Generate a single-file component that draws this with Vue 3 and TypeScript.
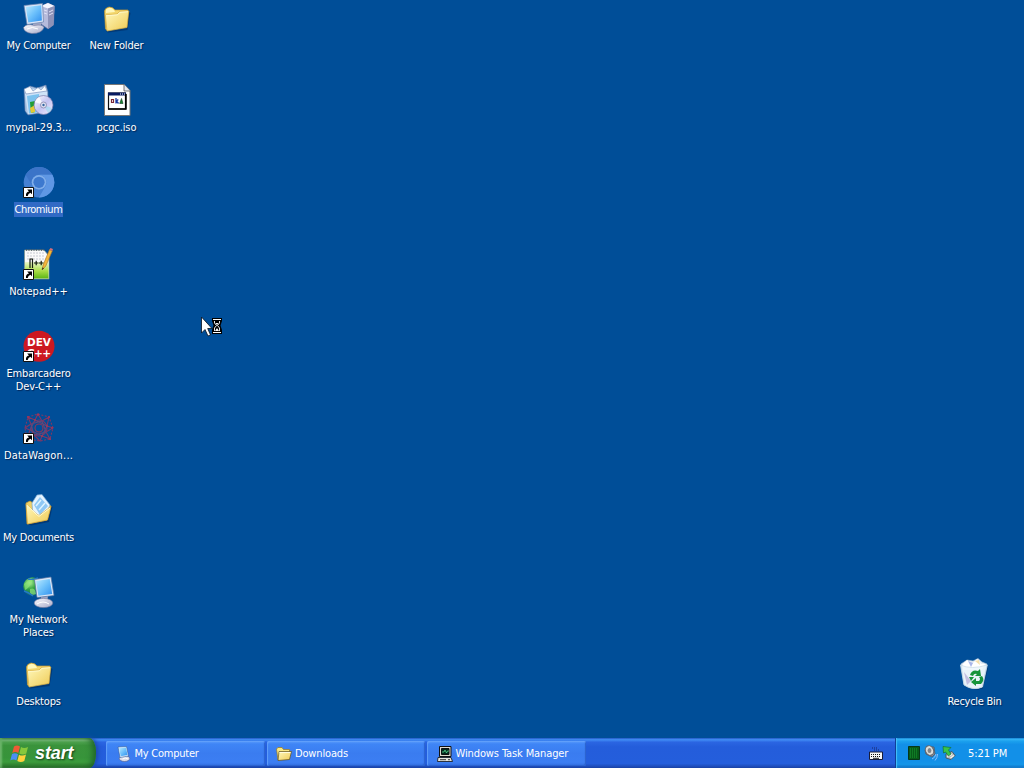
<script setup lang="ts">
interface DesktopItem {
  icon: string
  lines: string[]
  col: number
  row: number
  spacing: number
  shortcut?: boolean
  selected?: boolean
}

interface TaskItem {
  icon: string
  label: string
  spacing: number
}

const items: DesktopItem[] = [
  { icon: 'computer', lines: ['My Computer'], col: 1, row: 1, spacing: -0.24 },
  { icon: 'installer', lines: ['mypal-29.3...'], col: 1, row: 2, spacing: 0 },
  { icon: 'chromium', lines: ['Chromium'], col: 1, row: 3, spacing: -0.45, shortcut: true, selected: true },
  { icon: 'notepad', lines: ['Notepad++'], col: 1, row: 4, spacing: 0, shortcut: true },
  { icon: 'devcpp', lines: ['Embarcadero', 'Dev-C++'], col: 1, row: 5, spacing: -0.15, shortcut: true },
  { icon: 'wagon', lines: ['DataWagon...'], col: 1, row: 6, spacing: 0.2, shortcut: true },
  { icon: 'documents', lines: ['My Documents'], col: 1, row: 7, spacing: -0.25 },
  { icon: 'network', lines: ['My Network', 'Places'], col: 1, row: 8, spacing: -0.1 },
  { icon: 'folder', lines: ['Desktops'], col: 1, row: 9, spacing: -0.2 },
  { icon: 'folder', lines: ['New Folder'], col: 2, row: 1, spacing: -0.15 },
  { icon: 'iso', lines: ['pcgc.iso'], col: 2, row: 2, spacing: -0.1 },
  { icon: 'recycle', lines: ['Recycle Bin'], col: 13, row: 9, spacing: -0.27 },
]

const tasks: TaskItem[] = [
  { icon: 'computer', label: 'My Computer', spacing: -0.24 },
  { icon: 'folder', label: 'Downloads', spacing: -0.15 },
  { icon: 'manager', label: 'Windows Task Manager', spacing: -0.11 },
]
</script>

<template>
  <div class="screen">
    <svg class="defs" width="0" height="0" aria-hidden="true">
      <defs>
        <linearGradient id="glass" x1="0" y1="0" x2="1" y2="1">
          <stop offset="0" stop-color="#b9eaff" /><stop offset=".5" stop-color="#6cc0fb" /><stop offset="1" stop-color="#2f8fee" />
        </linearGradient>
        <linearGradient id="metal" x1="0" y1="0" x2="1" y2="1">
          <stop offset="0" stop-color="#fbfbff" /><stop offset="1" stop-color="#a7aac8" />
        </linearGradient>
        <linearGradient id="manila" x1="0" y1="0" x2="1" y2="1">
          <stop offset="0" stop-color="#fff9bd" /><stop offset="1" stop-color="#efca54" />
        </linearGradient>
        <linearGradient id="disc" x1="0" y1="0" x2="1" y2="1">
          <stop offset="0" stop-color="#fff" /><stop offset=".5" stop-color="#c4c3f2" /><stop offset="1" stop-color="#f3f0ff" />
        </linearGradient>
        <linearGradient id="grass" x1="0" y1="0" x2="0" y2="1">
          <stop offset="0" stop-color="#edf8cf" /><stop offset=".55" stop-color="#a9dc45" /><stop offset="1" stop-color="#5db615" />
        </linearGradient>
        <radialGradient id="globe" cx=".35" cy=".3" r=".75">
          <stop offset="0" stop-color="#b0ee9a" /><stop offset=".45" stop-color="#36a642" /><stop offset="1" stop-color="#0a5a7a" />
        </radialGradient>
        <g id="i-folder">
          <path d="M5 29.500 L25 26 L28 10 L29.500 11 L26.500 28 L7 30.500Z" fill="#00265b" opacity=".55" />
          <path d="M3.500 9 Q4 6 8 5 Q12 5 14 8 L27 8 L27 12 L6 28 L4.500 27Z" fill="#f3d76d" stroke="#c79a31" stroke-width=".7" />
          <path d="M5 7.500 Q9 4 13 8 L14 10 L5 11Z" fill="#fff7b8" />
          <path d="M4.300 13 L16 12 L18.500 9.500 L27.800 9 L26 25.500 L6 29Z" fill="url(#manila)" stroke="#d8ac3f" stroke-width=".7" />
          <path d="M5 13.700 L16.500 12.800 L19 10.300 L27 9.700" fill="none" stroke="#fffbd0" stroke-width=".9" />
        </g>
      </defs>
    </svg>

    <main class="desktop">
      <div
        v-for="item in items"
        :key="item.lines.join(' ')"
        class="item"
        :class="{ selected: item.selected }"
        :style="{ gridColumn: item.col, gridRow: item.row }"
      >
        <svg class="icon" viewBox="0 0 32 32" width="32" height="32">
          <use v-if="item.icon === 'folder'" href="#i-folder" />

          <g v-else-if="item.icon === 'computer'">
            <path d="M18 4 L25 1 L31.500 4 L30.500 23 L25 27 L18 22Z" fill="#b6bbdc" stroke="#646c9a" stroke-width=".6" />
            <path d="M18 4 L25 1 L31.500 4 L25 6.500Z" fill="#f5f6ff" />
            <path d="M25 6.500 L31.500 4 L30.500 23 L25 27Z" fill="#8d92b8" />
            <path d="M21 8 L24 9 M21 11 L24 12 M26 10 L30 8 M26 13 L30 11" stroke="#dfe2f6" stroke-width="1" />
            <path d="M10 20 L18 20 L18 27 L9 27Z" fill="#a3a8c6" />
            <path d="M.5 25.500 Q4 21 11 23.500 Q20 22 21 25.500 Q19 31.500 9 31.500 Q1 30.500 .5 25.500Z" fill="url(#metal)" stroke="#70779d" stroke-width=".6" />
            <path d="M1 3.500 L19.500 1.500 L20.500 20 L4 22.500Z" fill="#d9e5f8" stroke="#6883ad" stroke-width=".7" />
            <path d="M2.800 5 L18.200 3.200 L18.900 18.600 L5.300 20.500Z" fill="url(#glass)" />
            <path d="M4 27 Q9 24 15 27" stroke="#fff" fill="none" />
          </g>

          <g v-else-if="item.icon === 'installer'">
            <path d="M1 6 L7 2 L14 4 L23 1 L25 8 L25 28 L5 31 L2 27Z" fill="#a9c3e4" stroke="#516f9f" stroke-width=".6" />
            <path d="M1.500 6 L23 4 L24 8 L24 27 L5 30Z" fill="#cfe3f8" />
            <path d="M1 5 L7 2.500 L10 7 L15 3.500 L18 6 L22 1.500 L24 7 L3 10Z" fill="#f8fbff" stroke="#7289b5" stroke-width=".6" />
            <path d="M4 12 L16 10 L17 28 L6 29.500Z" fill="#7cc2ee" />
            <path d="M7 18 L12 17 L12 28 L8 29Z" fill="#239d35" />
            <path d="M7 24 L12 21 L12 28 L8 29Z" fill="#e3ca35" />
            <circle cx="20.500" cy="21" r="9.500" fill="url(#disc)" stroke="#7c7cab" stroke-width=".7" />
            <path d="M20.500 21 L12 18 A9 9 0 0 1 16 13Z" fill="#fff" opacity=".8" />
            <path d="M20.500 21 L29 24 A9 9 0 0 1 25 29Z" fill="#9bd8ef" opacity=".65" />
            <circle cx="20.500" cy="21" r="3" fill="#e3e3f4" stroke="#7a7da2" stroke-width=".7" />
            <circle cx="20.500" cy="21" r="1.200" fill="#3465a0" />
          </g>

          <g v-else-if="item.icon === 'chromium'">
            <circle cx="16" cy="16.300" r="15.300" fill="#4580d2" />
            <path d="M2.600 8.700 A15.300 15.300 0 0 1 29.300 8.800 H16 A7.700 7.700 0 0 0 9.300 19.800Z" fill="#3b74c8" />
            <path d="M16 8.800 H29.400 A15.300 15.300 0 0 1 16 31.600 L22.700 19.800 A7.700 7.700 0 0 0 16 8.800Z" fill="#5f97e4" />
            <circle cx="16" cy="16.300" r="7.300" fill="#80aeea" />
            <circle cx="16" cy="16.300" r="5.600" fill="#3d79cf" />
          </g>

          <g v-else-if="item.icon === 'notepad'">
            <path d="M1.500 2 H21 L26 8 V31 H1.500Z" fill="#fafafa" stroke="#7e9388" stroke-width=".7" />
            <path d="M2 14 H25.500 V30.500 H2Z" fill="url(#grass)" />
            <path d="M4 5 H22 M4 8 H22 M4 11 H24" stroke="#b9bcc7" stroke-width=".8" stroke-dasharray="2 1" />
            <path d="M3 2 H22" stroke="#4a545e" stroke-width="1.600" stroke-dasharray="1 1.500" />
            <path d="M7 20 V11 H9.500 V20 M11 15 H15.500 M13.200 12.700 V17.300 M16 15 H20.500 M18.200 12.700 V17.300" stroke="#151b12" stroke-width="1.200" fill="none" />
            <path d="M19 22 L20.500 16 L26.500 1.500 L29.300 3 L22.800 18Z" fill="#f2b53b" stroke="#a76f20" stroke-width=".6" />
            <path d="M26.500 1.500 L29.300 3 L30 1 L27.500 0Z" fill="#db6d78" />
            <path d="M19 22 L19.500 19.500 L21 20.300Z" fill="#272018" />
          </g>

          <g v-else-if="item.icon === 'devcpp'">
            <circle cx="16" cy="16.200" r="15.500" fill="#cc1821" />
            <text x="16" y="16.300" text-anchor="middle" class="dev" textLength="24">DEV</text>
            <text x="16" y="26.800" text-anchor="middle" class="dev" textLength="24">C++</text>
          </g>

          <g v-else-if="item.icon === 'wagon'" fill="none" stroke="#8f3560" stroke-width="1.100" opacity=".9">
            <path d="M15 2 L26 5 L30 16 L27 27 L17 29 L4 27 L2 16 L5 5Z" stroke-dasharray="2 1.500" />
            <path d="M15 2 L19 9 L26 5 L24 14 L30 16 L23 20 L27 27 L19 24 L17 29 L11 23 L4 27 L7 18 L2 16 L8 12 L5 5 L12 8Z" />
            <circle cx="16" cy="16" r="8" /><circle cx="16" cy="16" r="4" stroke="#a5334f" />
            <path d="M8 12 L19 9 L23 20 L11 23Z M12 8 L24 14 L19 24 L7 18Z" stroke="#6d4775" />
            <g fill="#b5334f" stroke="none">
              <circle cx="15" cy="2.500" r="1" /><circle cx="5" cy="5" r="1" /><circle cx="26" cy="5" r="1" /><circle cx="29" cy="16" r="1" /><circle cx="27" cy="27" r="1" /><circle cx="12" cy="8" r="1" /><circle cx="24" cy="14" r="1" /><circle cx="19" cy="24" r="1" />
            </g>
          </g>

          <g v-else-if="item.icon === 'documents'">
            <path d="M5 30 L24 26 L28 12 L29.500 13 L26 28 L8 31.500Z" fill="#00265b" opacity=".55" />
            <path d="M3 9 L7 7 L10 9 L24 10 L28 12 L24 26 L4 30Z" fill="#f0d168" stroke="#c6982e" stroke-width=".7" />
            <path d="M9 9 L14 1 L19 .5 L27 11 L21 25 L10 23Z" fill="#e4f3ff" stroke="#78a8d0" stroke-width=".7" />
            <path d="M11 11 L17 3 L25 12 L17 21Z" fill="#8fc8f5" />
            <path d="M13 12 L18 6 M16 16 L22 9" stroke="#dff4ff" stroke-width="1.500" />
            <path d="M3 10 L13 19.500 L16 21.500 L28 12.500 L24.500 26 L4.500 30Z" fill="url(#manila)" stroke="#d2a238" stroke-width=".7" />
            <path d="M3.800 11 L13 20 L16 22.300 L27 14" fill="none" stroke="#fffbd2" />
          </g>

          <g v-else-if="item.icon === 'network'">
            <circle cx="9.500" cy="10.500" r="9.300" fill="url(#globe)" />
            <path d="M1 8 Q5 5 8 2 Q11 5 8 8 Q5 13 2 14Z M7 13 Q12 11 13 18 Q9 20 7 17Z" fill="#8ee578" opacity=".7" />
            <path d="M5 3 Q10 4 15 2 M1 15 Q5 16 10 20" fill="none" stroke="#2277c9" stroke-width="1.400" />
            <path d="M18 21 L25 20 L24 26 L18 26Z" fill="#a1a6c4" />
            <ellipse cx="20.500" cy="27" rx="9.300" ry="4.600" fill="url(#metal)" stroke="#777ba0" stroke-width=".6" />
            <path d="M14 28 Q20 24 26 28" fill="none" stroke="#fff" />
            <path d="M11.500 3.500 L28 1 L31 19.500 L14 21.500Z" fill="#dbe7f8" stroke="#5673a0" stroke-width=".7" />
            <path d="M13 5 L26.700 3 L29.200 18 L15.400 19.800Z" fill="url(#glass)" />
          </g>

          <g v-else-if="item.icon === 'iso'">
            <path d="M3.500 .5 H23 L29 6.500 V31.500 H3.500Z" fill="#fff" stroke="#777" />
            <path d="M23 .5 V7 H29" fill="#e5e8f0" stroke="#555" stroke-width=".8" />
            <path d="M7.500 9 H24.500 V25 H7.500Z" fill="#fff" stroke="#111" stroke-width="1.200" />
            <path d="M7 8.500 H25 V11.500 H7Z" fill="#071a61" />
            <path d="M19 10 H24" stroke="#fff" stroke-dasharray="1 1" />
            <path d="M7 25 H25.500 M24.900 10 V25.500" stroke="#000" stroke-width="1.700" />
            <path d="M10.500 15.500 H12.500 V18.500 H10.500Z" fill="none" stroke="#7a2635" stroke-width="1.200" />
            <path d="M15 14 V19.500 M17.300 15.500 L15.500 17 L17.500 19.500" fill="none" stroke="#1636a2" stroke-width="1.300" />
            <path d="M20.500 14.500 L22 19.500 H18.700Z" fill="#168332" stroke="#123a1e" stroke-width=".6" />
          </g>

          <g v-else-if="item.icon === 'recycle'">
            <path d="M5 29 L20 32 L28.500 8 L29 11 L23.500 31Z" fill="#00265b" opacity=".5" />
            <path d="M2 6 L8 2 L14 3 L19 .5 L23 4 L28 6 L23 29 Q13 33 5 26.500Z" fill="#e6edf5" stroke="#abc1d3" stroke-width=".6" />
            <path d="M4 6 L8 2 L13 6 L18 1 L22 6 L26 6 L23 12 L4 12Z" fill="#fff" />
            <path d="M9 3 L14 5 L12 9Z" fill="#a9b6e9" /><path d="M16 3 L20 2 L21 7Z" fill="#f5dfaa" />
            <path d="M1.500 7 Q12 12 28.300 7 L23.500 29 Q14 33 5 27Z" fill="#e8f3fb" fill-opacity=".7" stroke="#cbdde9" stroke-width=".8" />
            <path d="M5 14 L12 23 L8 27Z" fill="#9d8bc7" opacity=".5" />
            <path d="M11 17 Q13 11 19 13 L21 11 L22 18 L16 18 L18 16 Q15 15 14 18Z M23 18 Q26 22 22 26 L17 26 V28 L12 24 L17 20 V23 H20 Q22 21 20 19Z M10 19 L15 19 L12 23Z" fill="#16943a" />
          </g>

          <g v-if="item.shortcut">
            <path d="M.5 21.500 H10.500 V31.500 H.5Z" fill="#fff" stroke="#111" />
            <path d="M3 30 Q2.500 26 6 25.500 L4.200 23.500 H9 V28.300 L7.400 26.700 Q5 27.500 4.700 30Z" fill="#000" />
          </g>
        </svg>
        <div class="label" :style="{ letterSpacing: item.spacing + 'px' }">
          <span v-for="line in item.lines" :key="line">{{ line }}</span>
        </div>
      </div>
    </main>

    <svg class="pointer" viewBox="0 0 23 22" width="23" height="22">
      <path d="M1.500 1 V17 L5 13.500 L8 20 L10.500 19 L7.700 12.500 H12Z" fill="#fff" stroke="#06101d" stroke-width=".8" />
      <path d="M12 2 H22 V5 L20.500 9.500 L22 14 V18 H12 V14 L13.500 9.500 L12 5Z" fill="#000" />
      <path d="M13 3.500 H21 M13 16.500 H21" stroke="#fff" stroke-width="1" />
      <path d="M14.500 5 V7 L16.500 9.500 L14.500 12 V15 M19.500 5 V7 L17.500 9.500 L19.500 12 V15" fill="none" stroke="#fff" stroke-width=".9" />
      <path d="M15.500 7 H18.500 L17 9Z M17 12 L19 15 H15Z" fill="#fff" />
    </svg>

    <footer class="taskbar">
      <button class="start">
        <svg viewBox="0 0 20 20" width="20" height="20">
          <path d="M4 3.500 Q7 1.500 10 3.500 L8.300 10 Q5.300 8.200 2.300 10Z" fill="#ef5b35" />
          <path d="M11 4 Q14 6 18 4 L16.300 10.500 Q12.800 12.300 9.300 10.400Z" fill="#86c83c" />
          <path d="M2 11 Q5 9.500 8 11.200 L6.400 17.500 Q3.200 15.700 .3 17.500Z" fill="#4b8ff5" />
          <path d="M9 11.700 Q12.500 13.500 16 11.600 L14.300 18 Q10.800 20 7.300 18Z" fill="#ffd13c" />
        </svg>
        <span>start</span>
      </button>
      <nav class="tasks">
        <button v-for="task in tasks" :key="task.label" class="task">
          <svg v-if="task.icon === 'folder'" viewBox="0 0 16 16" width="16" height="16">
            <path d="M.5 3 L2 1.500 H6 L7.500 3.500 H13.500 V13 L2 14Z" fill="#f9e782" stroke="#9a791c" stroke-width=".7" />
            <path d="M3 5.500 H15.500 L13.500 13.500 L2 14.500Z" fill="url(#manila)" stroke="#5b4e20" stroke-width=".7" />
            <path d="M3.500 6.500 H14.500" stroke="#fffce0" />
          </svg>
          <svg v-else-if="task.icon === 'computer'" viewBox="0 0 16 16" width="16" height="16">
            <ellipse cx="8.500" cy="12.500" rx="5.200" ry="3" fill="#dadce9" stroke="#525c88" stroke-width=".6" />
            <path d="M2 1 L10.500 .5 L12.500 10 L4 11.500Z" fill="#e0f1ff" stroke="#365e9b" stroke-width=".6" />
            <path d="M3 2 L10 1.500 L11.500 9 L4.700 10.200Z" fill="url(#glass)" />
            <path d="M6.500 13 Q9 11 12 13" stroke="#fff" fill="none" />
          </svg>
          <svg v-else viewBox="0 0 16 16" width="16" height="16">
            <path d="M2.500 .5 H14 V10.500 H2.500Z" fill="#dedbd0" stroke="#111" />
            <path d="M4.500 2.500 H12 V8.500 H4.500Z" fill="#03281b" stroke="#111" />
            <path d="M5 6 H7 L8 4 L9.500 7 L10.500 5 H12" fill="none" stroke="#57d790" stroke-width=".8" />
            <path d="M1 11.500 H14 L15.500 15.500 H.5Z" fill="#e6e4dd" stroke="#111" stroke-width=".8" />
            <path d="M3 13.700 H9 M11 13.700 H13" stroke="#333" />
          </svg>
          <span :style="{ letterSpacing: task.spacing + 'px' }">{{ task.label }}</span>
        </button>
      </nav>
      <div class="keyboard">
        <svg viewBox="0 0 14 13" width="14" height="13">
          <path d="M3 1 H9 M5 3 H11" stroke="#172766" stroke-dasharray="1 1" />
          <path d="M.5 5 H13.500 V12.500 H.5Z" fill="#f7f7f7" stroke="#171c38" />
          <path d="M2 7.500 H12 M2 9.500 H12" stroke="#111" stroke-dasharray="1 1" />
          <path d="M4 11.300 H10" stroke="#222" />
        </svg>
      </div>
      <div class="tray">
        <svg viewBox="0 0 12 14" width="12" height="14">
          <path d="M.5 .5 H11.500 V13.500 H.5Z" fill="#075b19" stroke="#063719" />
          <path d="M2 3 H10 M2 5 H10 M2 7 H10 M2 9 H10 M2 11 H10" stroke="#1a9c32" stroke-width="1" stroke-dasharray="1 1" />
        </svg>
        <svg viewBox="0 0 16 16" width="16" height="16">
          <path d="M2 5 L5 1.500 L11 2 L12 9 L9 12 L3 9Z" fill="#888b91" stroke="#4b5361" stroke-width=".7" />
          <ellipse cx="6.500" cy="5.500" rx="4" ry="4.900" transform="rotate(-25 6.500 5.500)" fill="#dcdcd6" stroke="#5f646e" />
          <ellipse cx="6.500" cy="5.500" rx="1.900" ry="2.500" fill="#81848a" />
          <path d="M9 14 Q12 13 13 9 M12 15.500 Q14.500 13 14.500 9" fill="none" stroke="#8fbff8" stroke-width="1" />
        </svg>
        <svg viewBox="0 0 16 16" width="16" height="16">
          <path d="M4 9 L10 6.500 L13 10.500 L9 14.500 L4 13Z" fill="#b8bec0" stroke="#434a50" stroke-width=".8" />
          <path d="M5 11.500 L10 9.500 M8.500 13 L12 10.500" stroke="#f3f3ec" stroke-width="1.300" />
          <path d="M1 1.500 L9 2.500 L6.500 5 L9 9 L6.500 11 L3.500 7 L1.500 8Z" fill="#39c448" stroke="#116628" stroke-width=".6" />
        </svg>
        <time>5:21 PM</time>
      </div>
    </footer>
  </div>
</template>

<style>
body {
  margin: 0;
  overflow: hidden;
  background: #004e98;
}
</style>

<style scoped>
.screen {
  position: relative;
  display: flex;
  flex-direction: column;
  width: 1024px;
  height: 768px;
  overflow: hidden;
  background: #004e98;
  color: #fff;
  font: 11px/13px "DejaVu Sans Condensed", "DejaVu Sans", sans-serif;
  font-stretch: condensed;
}
.defs {
  position: absolute;
}
.desktop {
  flex: none;
  display: grid;
  grid-template-columns: repeat(13, 78px);
  grid-template-rows: repeat(9, 82px);
  height: 738px;
}
.item {
  display: flex;
  flex-direction: column;
  align-items: center;
  gap: 4px;
  padding: 2px 1px 0 0;
}
.icon {
  flex: none;
  overflow: visible;
}
.label {
  display: flex;
  flex-direction: column;
  align-items: center;
  padding: 1px 1px;
  white-space: nowrap;
  text-shadow: 1px 1px 1px rgba(0, 20, 60, 0.7);
}
.selected .label {
  background: #316ac5;
  text-shadow: none;
}
.dev {
  fill: #fff;
  font: bold 10.5px "DejaVu Sans", sans-serif;
}
.pointer {
  position: absolute;
  left: 200px;
  top: 316px;
}
.taskbar {
  display: flex;
  flex: none;
  height: 30px;
  background: linear-gradient(#1f4fbd 0, #3d8af0 4%, #3b82f0 8%, #2b65e2 14%, #245ddb 30%, #245edc 85%, #1f50c0 93%, #1941a5 100%);
}
button {
  margin: 0;
  border: 0;
  color: inherit;
  font: inherit;
}
.start {
  display: flex;
  align-items: center;
  gap: 5px;
  width: 96px;
  padding: 0 0 0 10px;
  border-radius: 0 7px 7px 0 / 0 14px 14px 0;
  background: linear-gradient(#3f7d42 0, #76b678 7%, #4da24e 14%, #3a933b 25%, #37943a 65%, #3c9c3c 80%, #2d7a2d 94%, #205b24 100%);
  box-shadow: inset -5px 0 6px -2px #1f6429, inset 2px 0 2px #6cb56a, 2px 0 4px #1c49ad;
}
.start span {
  font: italic bold 18px/22px "Liberation Sans", sans-serif;
  letter-spacing: -0.1px;
  text-shadow: 1px 1px 2px #173e18;
}
.tasks {
  display: flex;
  flex: 1;
  align-items: flex-start;
  gap: 2px;
  padding: 3px 0 0 10px;
}
.task {
  display: flex;
  flex: none;
  align-items: center;
  gap: 3px;
  width: 158.5px;
  height: 25px;
  padding: 0 9.5px;
  border-radius: 2px;
  background: linear-gradient(#5a9bfb 0, #3f85f6 12%, #3a7cf0 50%, #3c7ef3 85%, #3370e2 100%);
  box-shadow: inset 1px 1px 1px #62a0fa, inset -1px -1px 1px #2b62ce;
  white-space: nowrap;
}
.keyboard {
  display: flex;
  align-items: center;
  width: 26px;
}
.tray {
  display: flex;
  align-items: center;
  gap: 3px;
  box-sizing: border-box;
  width: 129px;
  padding-left: 12px;
  border-left: 1px solid #103f97;
  background: linear-gradient(#1580d2 0, #2fb1f5 5%, #1ba0ed 11%, #1290e8 22%, #1290e8 75%, #1495e8 88%, #0f6fc0 100%);
  box-shadow: inset 1px 0 1px #46c2fa;
}
.tray time {
  margin-left: 7px;
  letter-spacing: -0.1px;
  white-space: nowrap;
}
</style>
